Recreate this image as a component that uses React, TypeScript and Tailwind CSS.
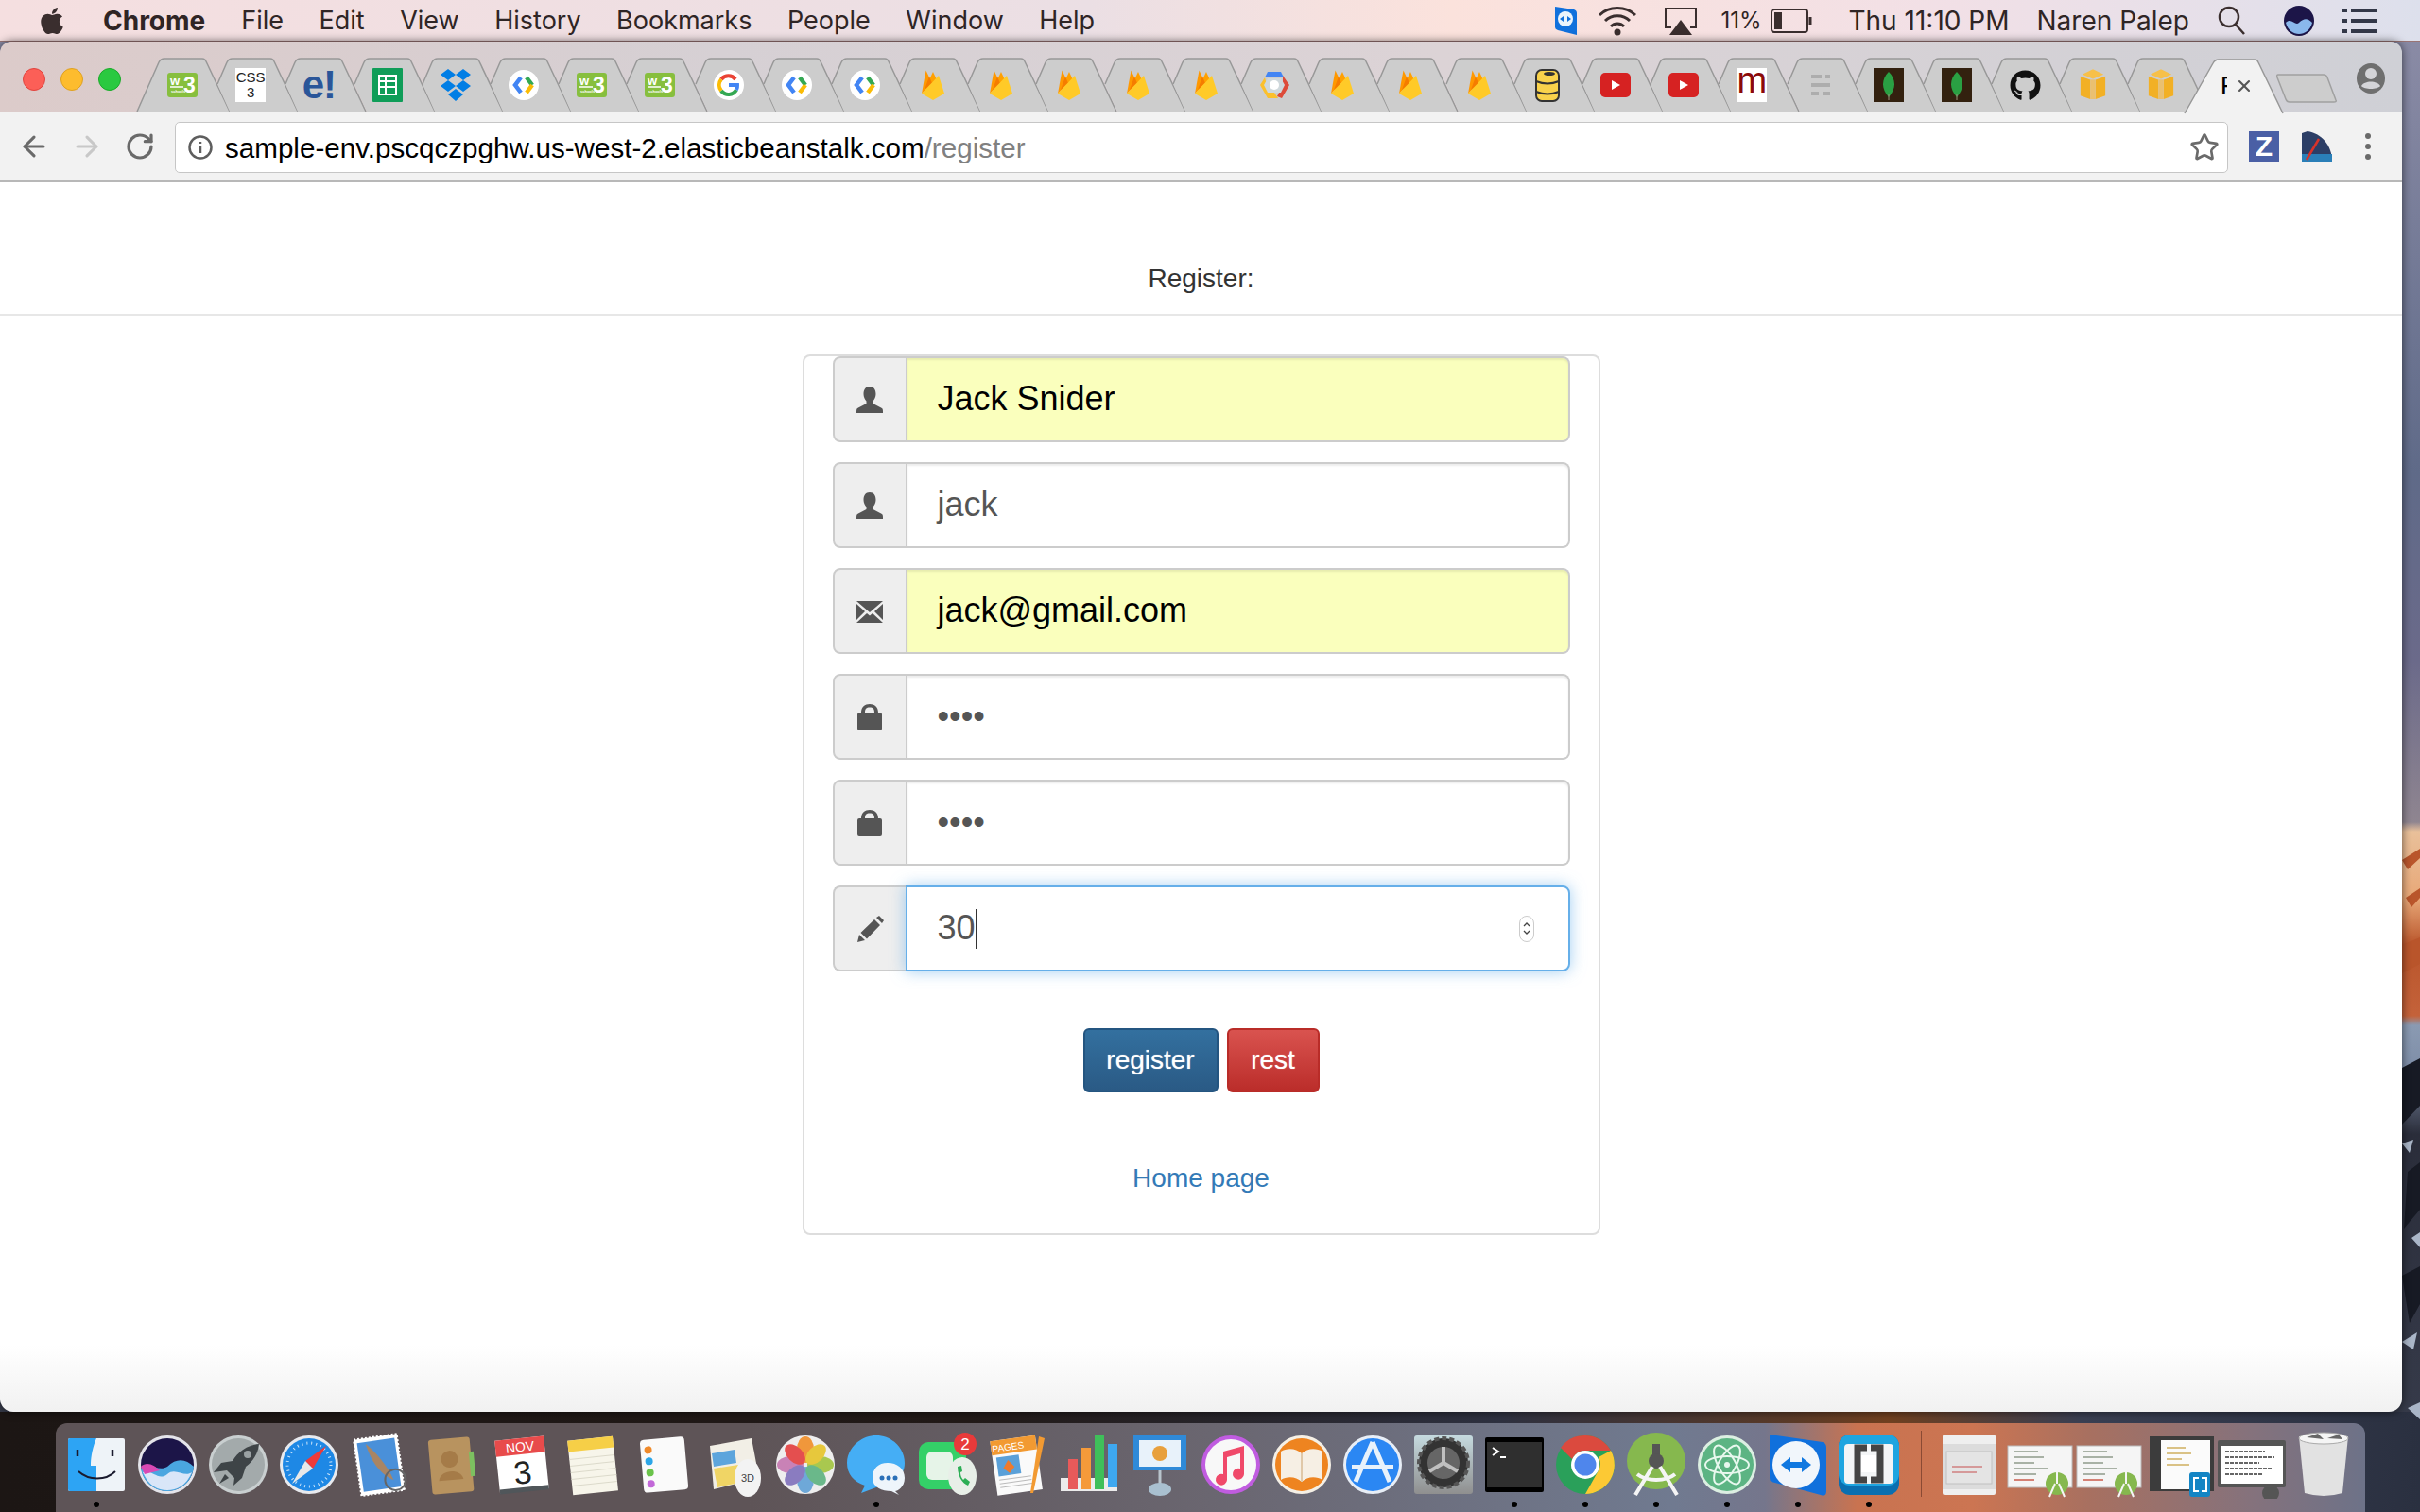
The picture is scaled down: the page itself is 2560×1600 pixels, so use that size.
import type { JSX } from 'react';
import { ArrowLeft, ArrowRight, RotateCw, Star, X } from 'lucide-react';
import { FaApple, FaGithub } from 'react-icons/fa';

const menuItems = ['File', 'Edit', 'View', 'History', 'Bookmarks', 'People', 'Window', 'Help'];

const Flame = () => (
  <svg viewBox="0 0 24 32" className="w-[24px] h-[32px]">
    <path d="M0 25 L4.500 0.500 L11 14 Z" fill="#ff9800" />
    <path d="M3 21 L12 2 L18 15 Z" fill="#ffa000" />
    <path d="M3 21 L8 7 L11 14 Z" fill="#f57c00" />
    <path d="M0 25 L18 6 L24 25 L12 32 Z" fill="#ffca28" />
  </svg>
);

const W3 = () => (
  <svg viewBox="0 0 32 26" className="w-[32px] h-[26px]">
    <rect width="32" height="26" rx="3" fill="#87bf3e" />
    <g fill="#fff" fontFamily="Liberation Sans" fontWeight="700">
      <text x="3" y="13" fontSize="13">w</text>
      <text x="17" y="21" fontSize="23">3</text>
      <text x="4" y="21" fontSize="4">schools</text>
    </g>
    <path d="M3 15 H17" stroke="#fff" strokeWidth="1.500" />
  </svg>
);

const CodeFav = () => (
  <svg viewBox="0 0 32 32" className="w-[32px] h-[32px]">
    <circle cx="16" cy="16" r="16" fill="#fff" />
    <path d="M13 8 L7 16 L13 24" fill="none" stroke="#4285f4" strokeWidth="4.500" />
    <path d="M19 8 L25 16" fill="none" stroke="#34a853" strokeWidth="4.500" />
    <path d="M25 16 L19 24" fill="none" stroke="#fbbc05" strokeWidth="4.500" />
  </svg>
);

const YouTube = () => (
  <svg viewBox="0 0 32 26" className="w-[32px] h-[26px]">
    <rect width="32" height="26" rx="5" fill="#d62222" />
    <path d="M12 8 L21 13 L12 18 Z" fill="#fff" />
  </svg>
);

const Mongo = () => (
  <svg viewBox="0 0 32 36" className="w-[32px] h-[36px]">
    <rect width="32" height="36" fill="#33210f" />
    <path d="M16 4 C24 12 24 22 16 31 C8 22 8 12 16 4 Z" fill="#2aa043" />
    <path d="M16 28 V34" stroke="#9c8f7a" strokeWidth="1" />
  </svg>
);

const BoxFav = () => (
  <svg viewBox="0 0 32 36" className="w-[30px] h-[36px]">
    <path d="M16 0 L28 6 L16 11 L4 6 Z" fill="#f7c04a" />
    <path d="M2 8 L13 12 V34 L2 30 Z M30 8 L19 12 V34 L30 30 Z" fill="#f2b025" />
    <rect x="13" y="12" width="6" height="22" fill="#eac070" />
  </svg>
);

const favicons: Record<string, JSX.Element> = {
  w3: <W3 />,
  css: (
    <div className="w-[32px] h-[36px] bg-white flex flex-col items-center justify-center text-[15px] leading-[16px] text-[#222]">
      <span>CSS</span>
      <span>3</span>
    </div>
  ),
  e: <span className="text-[42px] leading-[36px] font-bold text-[#2a5699] tracking-[-1px]">e!</span>,
  sheets: (
    <svg viewBox="0 0 32 36" className="w-[32px] h-[36px]">
      <rect width="32" height="36" rx="1" fill="#0f9d58" />
      <path d="M7 8 H25 V28 H7 Z M7 14 H25 M7 20 H25 M14 8 V28" fill="none" stroke="#fff" strokeWidth="2" />
    </svg>
  ),
  dropbox: (
    <svg viewBox="0 0 32 34" className="w-[32px] h-[34px]">
      <path d="M8 0 L16 6 L8 12 L0 6 Z M24 0 L32 6 L24 12 L16 6 Z M8 12 L16 18 L8 24 L0 18 Z M24 12 L32 18 L24 24 L16 18 Z M16 21 L24 27 L16 34 L8 27 Z" fill="#007ee5" />
    </svg>
  ),
  code: <CodeFav />,
  g: (
    <svg viewBox="0 0 32 32" className="w-[32px] h-[32px]">
      <circle cx="16" cy="16" r="16" fill="#fff" />
      <path d="M23 10 A9.5 9.5 0 0 0 8 10" fill="none" stroke="#ea4335" strokeWidth="4" />
      <path d="M8 10 A9.5 9.5 0 0 0 8 22" fill="none" stroke="#fbbc05" strokeWidth="4" />
      <path d="M8 22 A9.5 9.5 0 0 0 24 21" fill="none" stroke="#34a853" strokeWidth="4" />
      <path d="M24 21 A9.5 9.5 0 0 0 25 16 H16" fill="none" stroke="#4285f4" strokeWidth="4" />
    </svg>
  ),
  fire: <Flame />,
  gcp: (
    <svg viewBox="0 0 32 32" className="w-[32px] h-[32px]">
      <path d="M9 2 H23 L26 8 H6 Z" fill="#4285f4" />
      <path d="M6 8 L1 16 L9 30 H20 L16 24 H12 L8 16 Z" fill="#fbc02d" />
      <path d="M25 6 L32 16 L24 30 L19 28 L25 16 Z" fill="#dd4b39" />
      <path d="M9 9 H23 L27 16 L23 24 H9 L5 16 Z" fill="#cfd8dc" />
      <circle cx="16" cy="16" r="5" fill="#fff" />
    </svg>
  ),
  db: (
    <svg viewBox="0 0 26 36" className="w-[26px] h-[36px]">
      <rect x="1" y="2" width="24" height="33" rx="6" fill="#f9d24b" stroke="#333" strokeWidth="2" />
      <path d="M1 14 Q13 19 25 14 M1 25 Q13 30 25 25" fill="none" stroke="#333" strokeWidth="2" />
      <ellipse cx="15" cy="6" rx="6" ry="2" fill="#333" />
    </svg>
  ),
  yt: <YouTube />,
  m: (
    <div className="w-[32px] h-[36px] bg-white flex items-start justify-center">
      <span className="text-[38px] leading-[26px] text-[#8b0a0a]">m</span>
    </div>
  ),
  grey: (
    <svg viewBox="0 0 20 22" className="w-[20px] h-[22px]">
      <path d="M0 0 H11 V4 H0 Z M15 0 H20 V4 H15 Z M0 9 H20 V13 H0 Z M0 18 H8 V22 H0 Z M12 18 H20 V22 H12 Z" fill="#adadad" />
    </svg>
  ),
  mongo: <Mongo />,
  github: <FaGithub className="w-[33px] h-[33px] text-[#111]" />,
  box: <BoxFav />,
};

const tabIcons = [
  'w3', 'css', 'e', 'sheets', 'dropbox', 'code', 'w3', 'w3', 'g', 'code',
  'code', 'fire', 'fire', 'fire', 'fire', 'fire', 'gcp', 'fire', 'fire', 'fire',
  'db', 'yt', 'yt', 'm', 'grey', 'mongo', 'mongo', 'github', 'box', 'box',
];

const Tab = ({ icon, first }: { icon: string; first: boolean }) => (
  <div className="relative w-[72.2px] h-[56px] shrink-0">
    <svg width="99" height="56" className="absolute left-0 top-0 overflow-visible">
      <path d={first ? 'M0 56 L23 4 Q25 0 29 0 H69 Q72 0 73 3 L98 56 Z' : 'M13 27 L23 4 Q25 0 29 0 H69 Q72 0 73 3 L98 56 H26 Z'} fill="#cdcdcd" />
      <path d={first ? 'M0 56 L23 4 Q25 0 29 0 H69 Q72 0 73 3 L98 56' : 'M13 27 L23 4 Q25 0 29 0 H69 Q72 0 73 3 L98 56'} fill="none" stroke="#989898" strokeWidth="1.5" />
    </svg>
    <div className="absolute left-[27px] top-0 w-[42px] h-[56px] flex items-center justify-center">
      {favicons[icon]}
    </div>
  </div>
);

const UserIcon = () => (
  <svg viewBox="0 0 28 28" className="w-[28px] h-[28px]" fill="#555">
    <path d="M14 0 C18.500 0 20.500 3.500 20.500 8 C20.500 11 19 14 17.500 15.500 V18 L27 23 C28 23.800 28 25 28 28 H0 C0 25 0 23.800 1 23 L10.500 18 V15.500 C9 14 7.500 11 7.500 8 C7.500 3.500 9.500 0 14 0 Z" />
  </svg>
);

const MailIcon = () => (
  <svg viewBox="0 0 28 24" className="w-[28px] h-[24px]" fill="#555">
    <path d="M0 1 H28 L14 13 Z M0 4 L9 12 L0 21 Z M28 4 L19 12 L28 21 Z M0 24 L11 14 L14 16.500 L17 14 L28 24 Z" />
  </svg>
);

const LockIcon = () => (
  <svg viewBox="0 0 26 28" className="w-[26px] h-[28px]" fill="#555">
    <path fillRule="evenodd" d="M4 9 C4 3 8 0 13 0 C18 0 22 3 22 9 H24 Q26 9 26 11 V26 Q26 28 24 28 H2 Q0 28 0 26 V11 Q0 9 2 9 Z M8 9 H18 C18 5 16.500 3.500 13 3.500 C9.500 3.500 8 5 8 9 Z" />
  </svg>
);

const PencilIcon = () => (
  <svg viewBox="0 0 28 28" className="w-[28px] h-[28px]" fill="#555">
    <path d="M0 28 L2 20 L8 26 Z M3.500 18 L18 4 L24 10 L10 24.500 Z M20 2 L23 0 L28 5 L26 8 Z" />
  </svg>
);

const fields = [
  { icon: <UserIcon />, value: 'Jack Snider', filled: true },
  { icon: <UserIcon />, value: 'jack', filled: false },
  { icon: <MailIcon />, value: 'jack@gmail.com', filled: true },
  { icon: <LockIcon />, value: '••••', filled: false },
  { icon: <LockIcon />, value: '••••', filled: false },
];

const Field = ({ icon, value, filled }: { icon: JSX.Element; value: string; filled: boolean }) => (
  <div className="flex h-[91px] mb-[21px]">
    <div className="w-[79px] shrink-0 flex items-center justify-center bg-[#eeeeee] border-2 border-[#cccccc] rounded-l-[8px]">{icon}</div>
    <div className={`flex-1 flex items-center pl-[32px] pb-[2px] border-2 border-l-0 border-[#cccccc] rounded-r-[8px] text-[36px] shadow-[inset_0_2px_2px_rgba(0,0,0,0.075)] ${filled ? 'bg-[#faffbd] text-black' : 'bg-white text-[#555555]'}`}>
      {value}
    </div>
  </div>
);

const Dot = () => <div className="w-[6px] h-[6px] rounded-full bg-black mt-[3px]" />;

const dockIcons: { name: string; running?: boolean; svg: JSX.Element }[] = [
  {
    name: 'finder',
    running: true,
    svg: (
      <>
        <rect x="6" y="8" width="60" height="56" rx="2" fill="#eef3f8" />
        <path d="M8 8 H36 C31 20 30 30 30 37 H36 V64 H8 Q6 64 6 62 V10 Q6 8 8 8 Z" fill="#2da4f4" />
        <path d="M16 20 V27 M53 20 V27" stroke="#1a1a2e" strokeWidth="2.500" />
        <path d="M17 43 C28 53 46 53 56 43" fill="none" stroke="#1a1a2e" strokeWidth="2" />
      </>
    ),
  },
  {
    name: 'siri',
    svg: (
      <>
        <circle cx="36" cy="36" r="31" fill="#e4e4ea" />
        <circle cx="36" cy="36" r="28" fill="#1c1548" />
        <path d="M8 40 C18 32 26 44 36 38 C46 28 56 30 64 38 C62 56 48 64 36 64 C22 64 10 54 8 40 Z" fill="#4aa6e0" />
        <path d="M10 44 C20 40 26 54 36 46 C44 38 54 50 62 44 C56 58 46 63 36 63 C26 63 16 58 10 44 Z" fill="#d9e6f8" />
        <path d="M8 38 C14 32 22 36 28 42 L12 46 Z" fill="#d948b4" />
      </>
    ),
  },
  {
    name: 'launchpad',
    svg: (
      <>
        <circle cx="36" cy="36" r="31" fill="#c9cfd0" />
        <circle cx="36" cy="36" r="28" fill="#a3aaab" />
        <path d="M58 14 C46 15 36 22 30 32 L18 34 L10 44 L24 42 L32 50 L31 58 L40 50 L44 38 C52 32 57 24 58 14 Z" fill="#3e4447" />
        <path d="M22 46 L16 56 L26 50 Z" fill="#3e4447" />
        <circle cx="46" cy="25" r="4" fill="#9aa1a3" />
      </>
    ),
  },
  {
    name: 'safari',
    svg: (
      <>
        <circle cx="36" cy="36" r="31" fill="#e8eaee" />
        <circle cx="36" cy="36" r="28" fill="#1e88e5" />
        <circle cx="36" cy="36" r="23" fill="none" stroke="#cfe6fa" strokeWidth="3" strokeDasharray="1 4" />
        <path d="M54 16 L32 32 L40 40 Z" fill="#ee3a3a" />
        <path d="M18 56 L32 32 L40 40 Z" fill="#e8e8e8" />
      </>
    ),
  },
  {
    name: 'mail',
    svg: (
      <g transform="rotate(-8 36 36)">
        <rect x="12" y="6" width="46" height="60" fill="#fff" stroke="#fff" strokeWidth="2" strokeDasharray="2 2" />
        <rect x="15" y="10" width="40" height="52" fill="#4a90d9" />
        <path d="M24 12 C32 20 44 38 48 54 C38 48 28 36 24 12 Z" fill="#a98564" />
        <circle cx="50" cy="54" r="11" fill="none" stroke="#666" strokeWidth="2" />
      </g>
    ),
  },
  {
    name: 'contacts',
    svg: (
      <g transform="rotate(-5 36 36)">
        <rect x="14" y="8" width="44" height="58" rx="3" fill="#b8935f" />
        <rect x="56" y="24" width="5" height="26" fill="#7cc060" />
        <circle cx="35" cy="30" r="9" fill="#a57b48" />
        <path d="M22 52 C24 40 46 40 48 52 Z" fill="#a57b48" />
      </g>
    ),
  },
  {
    name: 'calendar',
    svg: (
      <g transform="rotate(-6 36 36)">
        <rect x="10" y="8" width="52" height="56" fill="#fff" />
        <rect x="10" y="60" width="52" height="5" fill="#50565a" />
        <rect x="10" y="8" width="52" height="17" fill="#e84b4b" />
        <text x="36" y="22" textAnchor="middle" fontSize="14" fill="#fff" fontFamily="Liberation Sans">NOV</text>
        <text x="36" y="56" textAnchor="middle" fontSize="34" fill="#222" fontFamily="Liberation Sans">3</text>
      </g>
    ),
  },
  {
    name: 'notes',
    svg: (
      <g transform="rotate(-6 36 36)">
        <rect x="12" y="8" width="48" height="58" fill="#f7f5ea" />
        <rect x="12" y="8" width="48" height="12" fill="#f6cf47" />
        <path d="M12 28 H60 M12 35 H60 M12 42 H60 M12 49 H60 M12 56 H60" stroke="#dcdacb" strokeWidth="1" />
      </g>
    ),
  },
  {
    name: 'reminders',
    svg: (
      <g transform="rotate(-5 36 36)">
        <rect x="13" y="8" width="47" height="56" rx="4" fill="#fafafa" />
        <circle cx="21" cy="19" r="4" fill="#f08a2a" />
        <circle cx="21" cy="31" r="4" fill="#2ca6e8" />
        <circle cx="21" cy="43" r="4" fill="#6ac34a" />
        <circle cx="21" cy="55" r="4" fill="#c268d8" />
      </g>
    ),
  },
  {
    name: 'maps',
    svg: (
      <>
        <path d="M10 16 L54 8 L62 50 L14 62 Z" fill="#f2efe6" />
        <path d="M12 24 L36 20 L38 34 L14 38 Z" fill="#5da5dc" />
        <path d="M14 40 L40 36 L46 54 L18 60 Z" fill="#f0d565" />
        <ellipse cx="50" cy="50" rx="14" ry="20" fill="#f3f3f3" />
        <text x="50" y="54" textAnchor="middle" fontSize="11" fill="#444" fontFamily="Liberation Sans">3D</text>
      </>
    ),
  },
  {
    name: 'photos',
    svg: (
      <>
        <ellipse cx="36" cy="36" rx="31" ry="31" fill="#eee" />
        <ellipse cx="36" cy="20" rx="9" ry="14" fill="#f0973b" />
        <ellipse cx="36" cy="52" rx="9" ry="14" fill="#6ea8d8" />
        <ellipse cx="20" cy="36" rx="14" ry="9" fill="#c982b6" />
        <ellipse cx="52" cy="36" rx="14" ry="9" fill="#a9c84f" />
        <ellipse cx="25" cy="25" rx="8" ry="13" fill="#e44f4f" transform="rotate(-45 25 25)" />
        <ellipse cx="47" cy="25" rx="8" ry="13" fill="#e7c83c" transform="rotate(45 47 25)" />
        <ellipse cx="25" cy="47" rx="8" ry="13" fill="#8a7cc0" transform="rotate(45 25 47)" />
        <ellipse cx="47" cy="47" rx="8" ry="13" fill="#6ab88a" transform="rotate(-45 47 47)" />
      </>
    ),
  },
  {
    name: 'messages',
    running: true,
    svg: (
      <>
        <path d="M36 5 C52 5 66 18 66 34 C66 50 52 60 36 60 L20 66 L24 58 C12 54 5 46 5 34 C5 18 20 5 36 5 Z" fill="#45aef5" />
        <path d="M48 34 C58 34 66 40 66 50 C66 60 58 64 56 64 L60 68 L52 64 C42 64 32 60 32 50 C32 40 38 34 48 34 Z" fill="#eef5fb" />
        <circle cx="42" cy="50" r="2.500" fill="#2a70b8" />
        <circle cx="49" cy="50" r="2.500" fill="#2a70b8" />
        <circle cx="56" cy="50" r="2.500" fill="#2a70b8" />
      </>
    ),
  },
  {
    name: 'facetime',
    svg: (
      <>
        <rect x="6" y="12" width="50" height="50" rx="10" fill="#34d068" />
        <rect x="14" y="22" width="28" height="30" rx="6" fill="#e6f4e8" />
        <ellipse cx="52" cy="48" rx="15" ry="20" fill="#e8efe8" />
        <path d="M47 38 C47 48 52 56 58 58 L60 54 L55 50 L53 52 C51 50 50 47 50 44 L52 43 L51 37 Z" fill="#2cae55" />
        <circle cx="55" cy="14" r="12" fill="#e83a3a" />
        <text x="55" y="20" textAnchor="middle" fontSize="17" fill="#fff" fontFamily="Liberation Sans">2</text>
      </>
    ),
  },
  {
    name: 'pages',
    svg: (
      <>
        <g transform="rotate(-8 32 36)">
          <rect x="10" y="8" width="48" height="58" fill="#fafafa" />
          <rect x="10" y="8" width="48" height="15" fill="#f29a32" />
          <text x="28" y="20" textAnchor="middle" fontSize="10" fill="#fff" fontFamily="Liberation Sans">PAGES</text>
          <rect x="14" y="26" width="24" height="20" fill="#5aa0d8" />
          <path d="M26 30 L32 38 L26 44 L20 38 Z" fill="#f07a2a" />
          <path d="M14 50 H48 M14 54 H48 M14 58 H48" stroke="#bbb" />
        </g>
        <path d="M58 6 L64 8 L52 66 L49 66 Z" fill="#f29a32" />
      </>
    ),
  },
  {
    name: 'numbers',
    svg: (
      <>
        <path d="M6 50 H66 V64 H6 Z" fill="#ececec" />
        <rect x="14" y="30" width="10" height="32" fill="#e85a5a" />
        <rect x="28" y="18" width="10" height="44" fill="#f59a3a" />
        <rect x="42" y="4" width="10" height="58" fill="#3fbf5a" />
        <rect x="56" y="14" width="10" height="46" fill="#3ea8f0" />
      </>
    ),
  },
  {
    name: 'keynote',
    svg: (
      <>
        <rect x="8" y="4" width="56" height="38" fill="#2f8ad8" />
        <rect x="14" y="10" width="44" height="28" fill="#e8f2fa" />
        <circle cx="36" cy="24" r="8" fill="#e8a03c" />
        <path d="M36 42 V60" stroke="#b9c4cc" strokeWidth="3" />
        <ellipse cx="36" cy="62" rx="12" ry="7" fill="#a9c0d0" />
      </>
    ),
  },
  {
    name: 'itunes',
    svg: (
      <>
        <circle cx="36" cy="36" r="31" fill="#c05ce0" />
        <circle cx="36" cy="36" r="27" fill="#f8f8f8" />
        <path d="M28 22 L50 16 V46 A6 6 0 1 1 46 40 V24 L32 28 V52 A6 6 0 1 1 28 46 Z" fill="#f0496a" />
      </>
    ),
  },
  {
    name: 'ibooks',
    svg: (
      <>
        <circle cx="36" cy="36" r="31" fill="#f5f0e6" />
        <circle cx="36" cy="36" r="28" fill="#ee8420" />
        <path d="M36 24 C30 18 20 18 14 22 V52 C20 48 30 48 36 54 C42 48 52 48 58 52 V22 C52 18 42 18 36 24 Z" fill="#f6efe4" />
        <path d="M36 24 V54" stroke="#e0c8a8" strokeWidth="2" />
      </>
    ),
  },
  {
    name: 'appstore',
    svg: (
      <>
        <circle cx="36" cy="36" r="31" fill="#e8eef6" />
        <circle cx="36" cy="36" r="28" fill="#2b87f3" />
        <path d="M36 12 L18 54 M36 12 L54 54" stroke="#e8f2fb" strokeWidth="5" />
        <path d="M14 38 H58" stroke="#e8f2fb" strokeWidth="4" />
      </>
    ),
  },
  {
    name: 'sysprefs',
    svg: (
      <>
        <defs>
          <linearGradient id="prefsBg" x1="0" y1="0" x2="0" y2="1">
            <stop offset="0" stopColor="#c5dadf" />
            <stop offset="1" stopColor="#8f8f8f" />
          </linearGradient>
        </defs>
        <rect x="5" y="5" width="62" height="62" rx="3" fill="url(#prefsBg)" />
        <circle cx="36" cy="34" r="26" fill="#333" stroke="#555" strokeWidth="4" strokeDasharray="5 3" />
        <circle cx="36" cy="34" r="17" fill="#666" />
        <path d="M36 34 V17 M36 34 L21 43 M36 34 L51 43" stroke="#c0c0c0" strokeWidth="4" />
      </>
    ),
  },
  {
    name: 'terminal',
    running: true,
    svg: (
      <>
        <rect x="5" y="7" width="62" height="58" rx="2" fill="#000" />
        <rect x="7" y="12" width="58" height="48" fill="#2f2f2f" />
        <path d="M13 18 L19 22 L13 26" fill="none" stroke="#fff" strokeWidth="2" />
        <path d="M21 28 H27" stroke="#fff" strokeWidth="2" />
      </>
    ),
  },
  {
    name: 'chrome',
    running: true,
    svg: (
      <>
        <circle cx="36" cy="36" r="31" fill="#2aa05a" />
        <path d="M36 5 A31 31 0 0 1 63 21 H36 A15 15 0 0 0 22 30 L10 18 A31 31 0 0 1 36 5 Z" fill="#db4a3e" />
        <path d="M63 21 A31 31 0 0 1 36 67 L50 42 A15 15 0 0 0 50 28 Z" fill="#fcc934" />
        <circle cx="36" cy="36" r="15" fill="#fff" />
        <circle cx="36" cy="36" r="11.500" fill="#4f86ec" />
      </>
    ),
  },
  {
    name: 'androidstudio',
    running: true,
    svg: (
      <>
        <ellipse cx="36" cy="32" rx="31" ry="30" fill="#86b84e" />
        <path d="M36 14 V28" stroke="#555" strokeWidth="8" />
        <circle cx="36" cy="32" r="8" fill="#555" />
        <path d="M32 38 L14 68 M40 38 L58 68" stroke="#f5f5f5" strokeWidth="4" />
        <path d="M16 46 C26 54 46 54 56 46" fill="none" stroke="#f5f5f5" strokeWidth="4" />
      </>
    ),
  },
  {
    name: 'atom',
    running: true,
    svg: (
      <>
        <circle cx="36" cy="36" r="31" fill="#dcefe2" />
        <circle cx="36" cy="36" r="28" fill="#5cb483" />
        <g fill="none" stroke="#e8f8ee" strokeWidth="2">
          <ellipse cx="36" cy="36" rx="23" ry="9" />
          <ellipse cx="36" cy="36" rx="23" ry="9" transform="rotate(60 36 36)" />
          <ellipse cx="36" cy="36" rx="23" ry="9" transform="rotate(-60 36 36)" />
        </g>
        <circle cx="36" cy="36" r="3" fill="#e8f8ee" />
      </>
    ),
  },
  {
    name: 'teamviewer',
    running: true,
    svg: (
      <>
        <path d="M6 4 L62 12 Q66 13 66 18 V64 Q66 70 60 68 L8 54 Q6 53 6 50 Z" fill="#1070dc" />
        <circle cx="34" cy="36" r="25" fill="#f1f6fb" />
        <path d="M18 36 L28 28 V33 H40 V28 L50 36 L40 44 V39 H28 V44 Z" fill="#1078e0" />
      </>
    ),
  },
  {
    name: 'brackets',
    running: true,
    svg: (
      <>
        <rect x="4" y="4" width="64" height="64" rx="12" fill="#0a6fb0" />
        <rect x="4" y="4" width="64" height="54" rx="12" fill="#1ea5e0" />
        <rect x="10" y="14" width="52" height="42" rx="4" fill="#f3f5f6" />
        <path d="M34 18 H24 V52 H34 M38 18 H48 V52 H38" fill="none" stroke="#444" strokeWidth="7" />
        <rect x="28" y="26" width="16" height="18" fill="#fff" />
      </>
    ),
  },
];

const Thumb = ({ badge }: { badge: 'android' | 'brackets' | 'terminal' | 'dark' }) => (
  <svg viewBox="0 0 72 72" className="w-[72px] h-[72px] shrink-0">
    {badge === 'android' && (
      <>
        <rect x="2" y="16" width="68" height="44" fill="#f5f5f5" stroke="#bbb" />
        <path d="M8 22 H34 M8 28 H40 M8 34 H30 M8 40 H44 M8 46 H32" stroke="#8f9a8a" strokeWidth="1.500" />
        <path d="M8 52 H30" stroke="#c85a4a" strokeWidth="1.500" />
        <circle cx="54" cy="56" r="12" fill="#86b84e" />
        <path d="M54 44 V56 M52 56 L46 70 M56 56 L62 70" stroke="#f5f5f5" strokeWidth="2" />
      </>
    )}
    {badge === 'dark' && (
      <>
        <rect x="2" y="6" width="68" height="58" fill="#3c3c3c" />
        <rect x="14" y="10" width="52" height="52" fill="#fbfbfb" />
        <path d="M20 18 H40 M20 24 H46 M20 30 H36 M20 36 H44" stroke="#d0b060" strokeWidth="1.500" />
        <rect x="44" y="44" width="22" height="26" rx="3" fill="#1485c4" />
        <path d="M54 50 H49 V64 H54 M57 50 H62 V64 H57" fill="none" stroke="#fff" strokeWidth="2" />
      </>
    )}
    {badge === 'terminal' && (
      <>
        <rect x="0" y="10" width="72" height="50" rx="2" fill="#555" />
        <rect x="3" y="16" width="66" height="40" fill="#fff" />
        <path d="M8 22 H50 M8 28 H60 M8 34 H44 M8 40 H58 M8 46 H48" stroke="#666" strokeWidth="2" strokeDasharray="4 1" />
        <circle cx="56" cy="66" r="9" fill="#555" />
      </>
    )}
  </svg>
);

const DockIcon = ({ running, children }: { running?: boolean; children: JSX.Element }) => (
  <div className="w-[75px] shrink-0 flex flex-col items-center">
    <svg viewBox="0 0 72 72" className="w-[72px] h-[72px] overflow-visible">{children}</svg>
    {running ? <Dot /> : null}
  </div>
);

export default function App() {
  return (
    <div className="relative w-[2560px] h-[1600px] overflow-hidden flex flex-col font-['Liberation_Sans',sans-serif] bg-[linear-gradient(180deg,#8e8ea8_0px,#5f6a88_500px,#6b6a8a_700px,#8f8590_870px,#e9c09a_880px,#e8a878_950px,#b9552b_1000px,#c4623a_1075px,#8a9ab2_1085px,#7f8ea8_1130px,#2a2d3a_1200px,#3a3f4f_1600px)]">
      {/* Rocks of the wallpaper, seen beside the window */}
      <svg viewBox="0 0 19 700" className="absolute right-0 top-[880px] w-[19px] h-[700px]">
        <path d="M0 30 L19 18 V28 L6 40 Z M4 70 L19 60 V70 L10 80 Z M0 120 L19 112 V140 L0 150 Z" fill="#b9552b" />
        <path d="M0 250 L19 240 V290 L0 310 Z M6 360 L19 350 V400 L2 420 Z M0 470 L19 460 V500 L8 520 Z" fill="#171a24" />
        <path d="M0 330 L12 326 L8 340 Z M10 430 L19 424 V440 Z M0 540 L16 530 L12 548 Z M6 610 L19 604 V622 Z" fill="#aab6c8" />
      </svg>

      {/* Menu bar */}
      <div className="h-[44px] shrink-0 flex items-center pt-[1px] text-[#2f2525] text-[27px] font-['Inter',sans-serif] bg-[linear-gradient(90deg,#f5dfe0_0%,#ebdfe4_45%,#fbe2dc_60%,#f2e0e6_80%,#dde0ec_100%)] border-b border-[#9a7474]">
        <FaApple className="w-[30px] h-[32px] ml-[40px] text-[#3a2e2e]" />
        <span className="ml-[39px] font-bold text-[28px]">Chrome</span>
        <div className="flex gap-[37.5px] ml-[38px]">
          {menuItems.map((item) => (
            <span key={item}>{item}</span>
          ))}
        </div>
        <div className="ml-auto flex items-center pr-[45px]">
          <svg viewBox="0 0 23 30" className="w-[23px] h-[30px]">
            <path d="M0 0 L20 3 Q23 4 23 7 V30 L3 25 Q0 24 0 22 Z" fill="#1070dc" />
            <circle cx="11" cy="13" r="8" fill="#eaf3fb" />
            <path d="M5 13 L9 10 V16 Z M17 13 L13 10 V16 Z" fill="#1070dc" />
          </svg>
          <svg viewBox="0 0 42 32" className="w-[42px] h-[32px] ml-[22px]" fill="none" stroke="#3a2e2e" strokeWidth="3">
            <path d="M2 10 C12 0 30 0 40 10 M8 16 C15 9 27 9 34 16 M14 22 C18 18 24 18 28 22" />
            <circle cx="21" cy="28" r="2" fill="#3a2e2e" />
          </svg>
          <svg viewBox="0 0 36 30" className="w-[36px] h-[30px] ml-[28px]" fill="none" stroke="#3a2e2e" strokeWidth="2">
            <path d="M8 22 H2 V2 H34 V22 H28" />
            <path d="M18 14 L30 30 H6 Z" fill="#3a2e2e" stroke="none" />
          </svg>
          <span className="ml-[24px] text-[24px]">11%</span>
          <svg viewBox="0 0 44 28" className="w-[44px] h-[28px] ml-[10px]" fill="none" stroke="#3a2e2e" strokeWidth="2">
            <rect x="1" y="2" width="38" height="24" rx="3" />
            <rect x="4" y="5" width="8" height="18" fill="#3a2e2e" stroke="none" />
            <path d="M42 10 V18" strokeWidth="3" />
          </svg>
          <span className="ml-[38px] text-[28px]">Thu 11:10 PM</span>
          <span className="ml-[29px] text-[28px]">Naren Palep</span>
          <svg viewBox="0 0 30 32" className="w-[30px] h-[32px] ml-[30px]" fill="none" stroke="#3a2e2e" strokeWidth="2.500">
            <circle cx="12" cy="12" r="10" />
            <path d="M19 20 L28 30" />
          </svg>
          <svg viewBox="0 0 32 32" className="w-[32px] h-[32px] ml-[40px]">
            <circle cx="16" cy="16" r="16" fill="#1c1548" />
            <path d="M2 18 C8 12 12 22 16 18 C22 12 26 14 30 18 C28 26 22 30 16 30 C10 30 4 26 2 18 Z" fill="#8ab8ec" />
          </svg>
          <svg viewBox="0 0 37 26" className="w-[37px] h-[26px] ml-[30px]" fill="#333848">
            <path d="M0 0 H5 V4 H0 Z M9 0 H37 V4 H9 Z M0 11 H5 V15 H0 Z M9 11 H37 V15 H9 Z M0 22 H5 V26 H0 Z M9 22 H37 V26 H9 Z" />
          </svg>
        </div>
      </div>

      {/* Chrome window */}
      <div className="relative w-[2541px] h-[1450px] shrink-0 flex flex-col rounded-t-[12px] rounded-b-[14px] overflow-hidden shadow-[0_0_10px_rgba(0,0,0,0.6)]">
        <div className="h-[75px] shrink-0 flex items-end bg-[linear-gradient(90deg,#dccbca_0%,#d6d0d4_30%,#dcd3d6_60%,#cfd0d6_100%)] border-b border-[#a8a8a8]">
          <div className="w-[145px] shrink-0 self-start flex gap-[16px] pl-[24px] pt-[28px]">
            <div className="w-[24px] h-[24px] rounded-full bg-[#fc5f57] border border-[#e0443e]" />
            <div className="w-[24px] h-[24px] rounded-full bg-[#fdbc2e] border border-[#dea123]" />
            <div className="w-[24px] h-[24px] rounded-full bg-[#2ac940] border border-[#1aab29]" />
          </div>
          <div className="flex items-end">
            {tabIcons.map((icon, idx) => (
              <Tab key={idx} icon={icon} first={idx === 0} />
            ))}
          </div>
          <div className="relative z-10 w-[97px] h-[56px] shrink-0 -mb-px">
            <svg width="104" height="57" className="absolute left-0 top-0 overflow-visible">
              <path d="M0 57 L30 4 Q32 0 36 0 H74 Q77 0 78 3 L104 57 Z" fill="#f2f2f2" />
              <path d="M0 57 L30 4 Q32 0 36 0 H74 Q77 0 78 3 L104 57" fill="none" stroke="#989898" strokeWidth="1.500" />
            </svg>
            <div className="absolute left-[38px] top-0 h-[56px] flex items-center gap-[8px] text-[#222]">
              <span className="w-[7px] overflow-hidden text-[28px] leading-none text-black">F</span>
              <X className="w-[20px] h-[20px] text-[#555]" strokeWidth={2.5} />
            </div>
          </div>
          <svg viewBox="0 0 64 31" className="w-[64px] h-[31px] shrink-0 mb-[9px]">
            <path d="M2 1 H50 Q53 1 54 4 L63 28 Q64 30 61 30 H14 Q11 30 10 27 L1 4 Q0 1 2 1 Z" fill="#cdcdcd" stroke="#a0a0a0" strokeWidth="1.500" />
          </svg>
          <svg viewBox="0 0 30 32" className="w-[30px] h-[32px] shrink-0 ml-[21px] self-start mt-[23px]">
            <ellipse cx="15" cy="16" rx="15" ry="16" fill="#6f6f6f" />
            <circle cx="15" cy="11" r="6" fill="#d4d4d8" />
            <path d="M5 24 C8 18 22 18 25 24 C22 28 8 28 5 24 Z" fill="#d4d4d8" />
          </svg>
        </div>

        <div className="h-[74px] shrink-0 flex items-center bg-[#f2f2f2] border-b-2 border-[#b8b8b8]">
          <ArrowLeft className="w-[34px] h-[34px] ml-[19px] text-[#6a6a6a]" strokeWidth={2.2} />
          <ArrowRight className="w-[34px] h-[34px] ml-[22px] text-[#c8c8c8]" strokeWidth={2.2} />
          <RotateCw className="w-[32px] h-[32px] ml-[23px] text-[#6a6a6a]" strokeWidth={2.4} />
          <div className="ml-[21px] mt-[2px] w-[2172px] h-[54px] bg-white border border-[#c6c6c6] rounded-[5px] flex items-center pl-[13px] pr-[8px] text-[29.6px]">
            <svg viewBox="0 0 26 26" className="w-[26px] h-[26px] shrink-0" fill="none" stroke="#5e5e5e" strokeWidth="2.500">
              <circle cx="13" cy="13" r="11.500" />
              <path d="M13 11 V19 M13 7 V9" />
            </svg>
            <span className="ml-[13px] mt-[2px] text-black">
              sample-env.pscqczpghw.us-west-2.elasticbeanstalk.com<span className="text-[#808080]">/register</span>
            </span>
            <Star className="ml-auto w-[32px] h-[32px] text-[#6a6a6a]" strokeWidth={2} />
          </div>
          <div className="ml-[22px] w-[32px] h-[32px] bg-[#4a5fa5] flex items-center justify-center text-white font-bold text-[30px] leading-none">Z</div>
          <svg viewBox="0 0 32 32" className="w-[32px] h-[32px] ml-[24px]">
            <path d="M6 0 C20 2 32 14 32 32 H0 V2 Z" fill="#2c3e66" />
            <path d="M0 24 H32 V32 H0 Z" fill="#2a7fb8" />
            <path d="M5 30 L18 8" stroke="#d8332a" strokeWidth="2.500" />
          </svg>
          <div className="ml-[35px] flex flex-col gap-[5px]">
            <div className="w-[6px] h-[6px] rounded-full bg-[#6a6a6a]" />
            <div className="w-[6px] h-[6px] rounded-full bg-[#6a6a6a]" />
            <div className="w-[6px] h-[6px] rounded-full bg-[#6a6a6a]" />
          </div>
        </div>

        {/* Page */}
        <div className="flex-1 flex flex-col items-center bg-[linear-gradient(180deg,#ffffff_0px,#ffffff_1230px,#f1f1f1_1301px)] text-[28px] text-[#333333]">
          <div className="w-full h-[141px] shrink-0 flex justify-center items-end pb-[17px] border-b-2 border-[#e7e7e7] leading-[40px]">
            Register:
          </div>
          <div className="mt-[41px] w-[844px] h-[932px] shrink-0 border-2 border-[#dddddd] rounded-[8px] px-[30px] bg-white">
            {fields.map((field, idx) => (
              <Field key={idx} icon={field.icon} value={field.value} filled={field.filled} />
            ))}
            <div className="flex h-[91px]">
              <div className="w-[77px] shrink-0 flex items-center justify-center bg-[#eeeeee] border-2 border-r-0 border-[#cccccc] rounded-l-[8px] pl-[2px]">
                <PencilIcon />
              </div>
              <div className="flex-1 flex items-center pl-[32px] pr-[36px] bg-white border-2 border-[#66afe9] rounded-r-[8px] text-[36px] text-[#555555] shadow-[0_0_16px_rgba(102,175,233,0.6)]">
                <span className="pb-[2px]">30</span>
                <div className="w-[2px] h-[42px] bg-[#333333]" />
                <div className="ml-auto w-[16px] h-[28px] rounded-full border border-[#cccccc] bg-white flex flex-col items-center justify-center gap-[3px]">
                  <svg viewBox="0 0 8 5" className="w-[8px] h-[5px]" fill="none" stroke="#444" strokeWidth="1.300"><path d="M1 4 L4 1 L7 4" /></svg>
                  <svg viewBox="0 0 8 5" className="w-[8px] h-[5px]" fill="none" stroke="#444" strokeWidth="1.300"><path d="M1 1 L4 4 L7 1" /></svg>
                </div>
              </div>
            </div>
            <div className="flex justify-center gap-[9px] mt-[60px]">
              <button className="w-[143px] h-[68px] rounded-[6px] border-2 border-[#245580] bg-[linear-gradient(180deg,#33709f,#2a5a85)] text-white text-[28px] [text-shadow:0_0_1px_rgba(255,255,255,0.7)]">register</button>
              <button className="w-[98px] h-[68px] rounded-[6px] border-2 border-[#b92c28] bg-[linear-gradient(180deg,#d9534f,#bb2d2a)] text-white text-[28px] [text-shadow:0_0_1px_rgba(255,255,255,0.7)]">rest</button>
            </div>
            <div className="mt-[71px] text-center leading-[40px] text-[#337ab7]">Home page</div>
          </div>
        </div>
      </div>

      {/* Wallpaper under the window, with the dock on it */}
      <div className="flex-1 pt-[12px] bg-[linear-gradient(90deg,#1c1614_0%,#221a18_40%,#2e3140_62%,#5a3a28_74%,#704020_78%,#3a3f52_86%,#2a3040_100%)]">
        <div className="ml-[59px] w-[2443px] h-[94px] flex pt-[8px] pl-[5px] rounded-tl-[12px] rounded-tr-[12px] bg-[linear-gradient(90deg,#5e5457_0%,#5e5457_30%,#6a6670_50%,#707a90_70%,#75768c_74%,#c97350_78%,#cc7552_83%,#a87060_88%,#85727c_95%,#6d7288_100%)]">
          {dockIcons.map((icon) => (
            <DockIcon key={icon.name} running={icon.running}>{icon.svg}</DockIcon>
          ))}
          <div className="w-px h-[70px] bg-[#8a4a34] ml-[18px] shrink-0" />
          <svg viewBox="0 0 72 72" className="w-[72px] h-[72px] ml-[14px] shrink-0">
            <rect x="8" y="4" width="56" height="64" rx="2" fill="#efefef" />
            <rect x="8" y="14" width="56" height="48" fill="#dcdcdc" />
            <rect x="12" y="22" width="48" height="34" fill="#e4e4e4" stroke="#c0c0c0" />
            <path d="M18 38 H50 M18 44 H44" stroke="#d08080" strokeWidth="1.500" />
          </svg>
          <div className="ml-[3px]"><Thumb badge="android" /></div>
          <div className="ml-[1px]"><Thumb badge="android" /></div>
          <div className="ml-[5px]"><Thumb badge="dark" /></div>
          <div className="ml-[2px]"><Thumb badge="terminal" /></div>
          <svg viewBox="0 0 72 72" className="w-[72px] h-[72px] ml-[4px] shrink-0">
            <path d="M10 6 H62 L56 66 Q36 72 16 66 Z" fill="#e2e2e2" />
            <ellipse cx="36" cy="8" rx="26" ry="6" fill="#f5f5f5" stroke="#aaa" />
            <path d="M18 7 L30 3 L36 9 Z M40 8 L52 4 L56 9 Z" fill="#666" />
          </svg>
        </div>
      </div>
    </div>
  );
}
